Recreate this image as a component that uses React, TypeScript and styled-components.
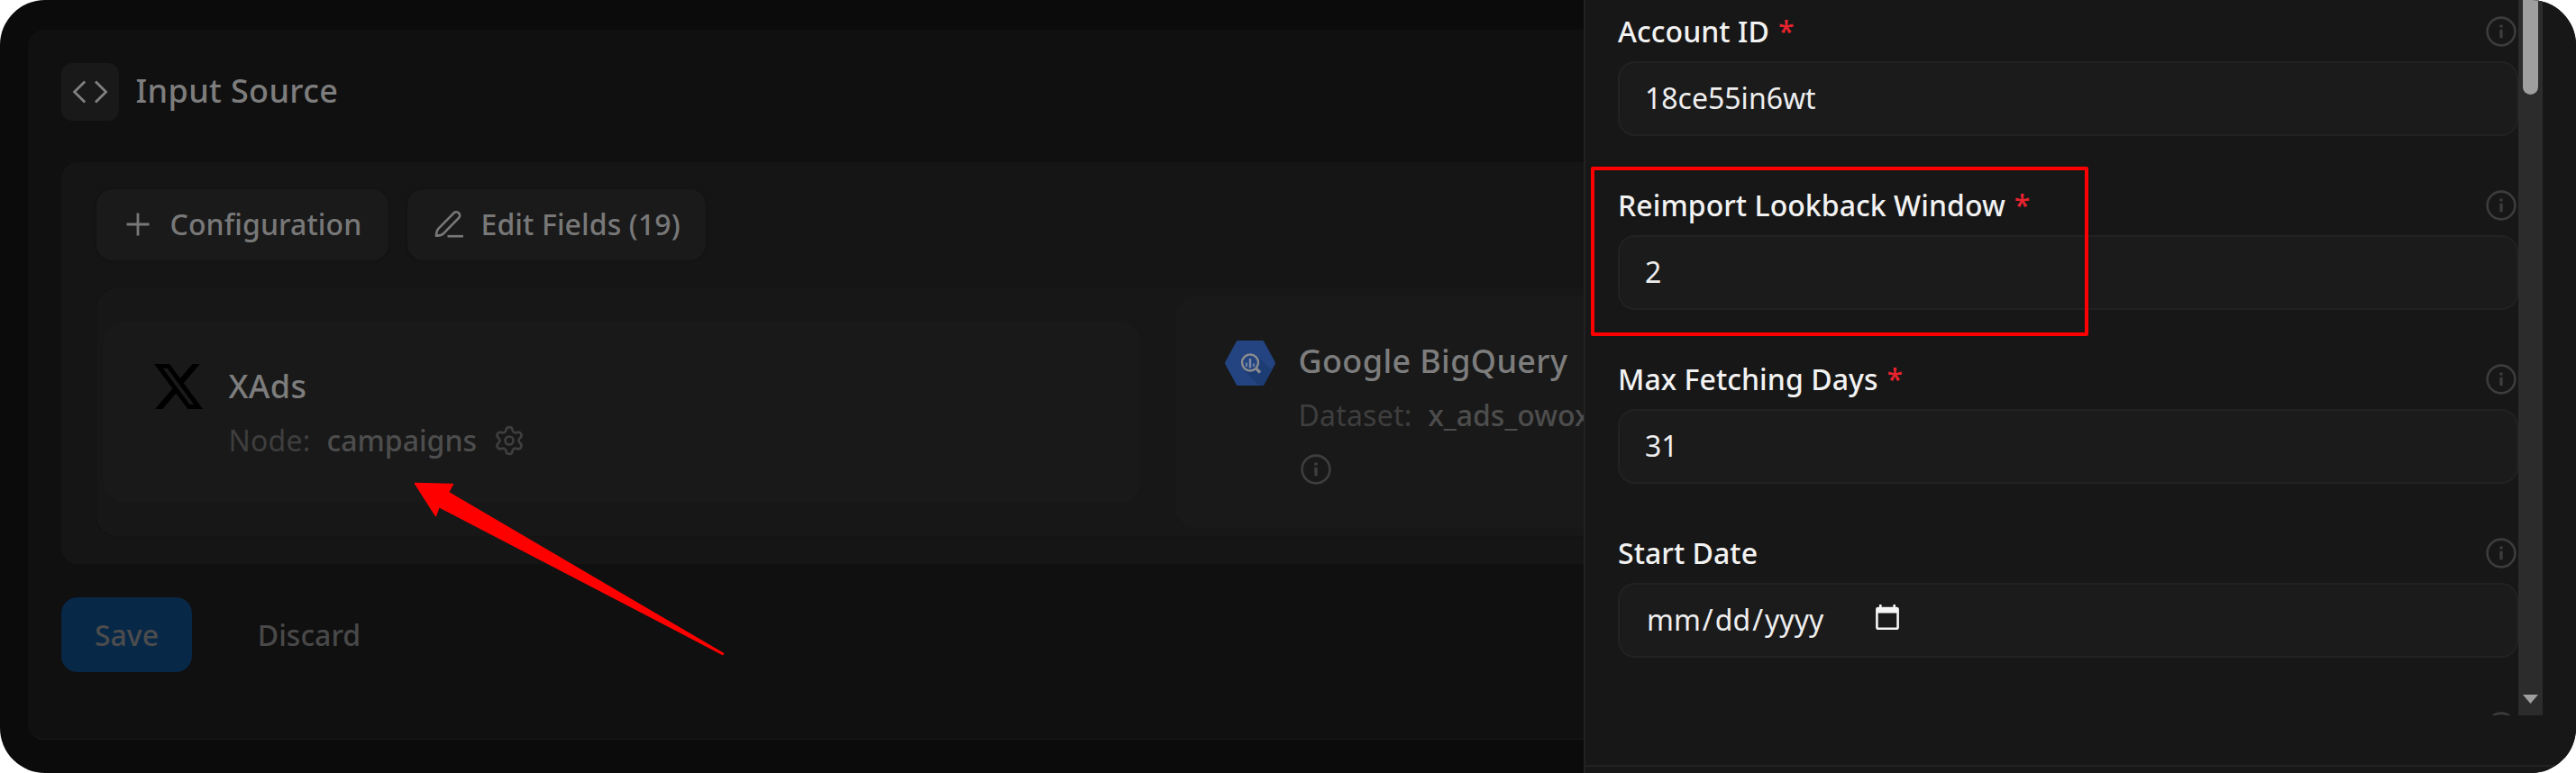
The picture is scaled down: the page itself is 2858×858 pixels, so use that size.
import React from "react";
import styled, { createGlobalStyle } from "styled-components";
import { Settings } from "lucide-react";

const GlobalStyle = createGlobalStyle`
  * { box-sizing: border-box; }
  html, body { margin: 0; background: #fff; }
  body { font-family: "Noto Sans", sans-serif; font-size: 32px; line-height: 46px; }
  svg { display: block; flex: none; }
`;

const Frame = styled.div`
  position: relative;
  display: flex;
  width: 2858px;
  height: 858px;
  border-radius: 50px;
  overflow: hidden;
  background: #0b0b0b;
`;

const Main = styled.main`
  width: 1757px;
  flex: none;
  overflow: hidden;
  padding: 33px 0 37px 31px;
`;

const SourceCard = styled.section`
  width: 2400px;
  height: 788px;
  padding: 37px;
  border-radius: 18px;
  background: #101010;
  border-bottom: 1px solid #191919;
`;

const Header = styled.header`
  display: flex;
  align-items: center;
  gap: 18.5px;
`;

const IconTile = styled.div`
  display: grid;
  place-items: center;
  width: 64px;
  height: 64px;
  border-radius: 12px;
  background: #191919;
  color: #808080;
`;

const Title = styled.h2`
  margin: 0;
  font-size: 36px;
  font-weight: 500;
  line-height: 50px;
  letter-spacing: 0.35px;
  color: #7d7d7d;
  white-space: nowrap;
`;

const HeaderTitle = styled(Title)`
  padding-bottom: 3px;
`;

const Panel = styled.div`
  margin-top: 46px;
  height: 446px;
  padding: 29.5px 39px;
  border-radius: 18px;
  background: #151515;
`;

const Toolbar = styled.div`
  display: flex;
  gap: 21.5px;
`;

const ToolButton = styled.button<{ $width: number }>`
  display: flex;
  align-items: center;
  gap: 20px;
  width: ${(p) => p.$width}px;
  height: 79px;
  padding: 0 0 1px 29.5px;
  border: 0;
  border-radius: 18px;
  background: #1a1a1a;
  box-shadow: 0 0 2px 1px #131313;
  color: #787878;
  font: inherit;
  font-weight: 500;
  letter-spacing: 0.1px;
  white-space: nowrap;
`;

const Flow = styled.div`
  display: flex;
  align-items: center;
  gap: 38.5px;
  height: 275.5px;
  margin-top: 31px;
  padding-left: 8px;
  border-radius: 22px;
  background: #171717;
  box-shadow: 0 0 0 1px #131313;
`;

const EndpointCard = styled.article<{ $width: number; $height: number; $gap: number }>`
  display: flex;
  align-items: flex-start;
  gap: ${(p) => p.$gap}px;
  flex: none;
  width: ${(p) => p.$width}px;
  height: ${(p) => p.$height}px;
  padding: 47px 0 0 55.5px;
  border-radius: 22px;
  background: #191919;
`;

const EndpointLogo = styled.div<{ $drop?: number }>`
  padding-top: ${(p) => p.$drop ?? 0}px;
`;

const EndpointInfo = styled.div`
  display: flex;
  flex-direction: column;
  gap: 12.5px;
`;

const Detail = styled.div`
  display: flex;
  align-items: center;
  gap: 18px;
  height: 46px;
  color: #3e3e3e;
  white-space: nowrap;
`;

const HintDetail = styled(Detail)`
  padding: 3px 0 0 2.5px;
`;

const DetailLabel = styled.span`
  letter-spacing: 0.2px;
`;

const DetailValue = styled.span`
  font-weight: 500;
  color: #4d4d4d;
`;

const Actions = styled.div`
  display: flex;
  gap: 37px;
  margin-top: 37px;
`;

const ActionButton = styled.button<{ $primary?: boolean }>`
  height: 83px;
  width: ${(p) => (p.$primary ? 145 : 186)}px;
  padding: 0;
  border: 0;
  border-radius: 18px;
  background: ${(p) => (p.$primary ? "#082848" : "transparent")};
  color: ${(p) => (p.$primary ? "#4c4c4c" : "#484848")};
  font: inherit;
  font-weight: 500;
`;

const Drawer = styled.aside`
  flex: 1;
  display: flex;
  flex-direction: column;
  border-left: 2px solid #222;
  background: #171717;
`;

const DrawerScroll = styled.div`
  display: flex;
  width: 1062px;
  height: 794px;
  overflow: hidden;
`;

const FieldList = styled.div`
  display: flex;
  flex-direction: column;
  gap: 54px;
  flex: 1;
  padding: 12px 0 0 36px;
`;

const Field = styled.div`
  display: flex;
  flex-direction: column;
  gap: 10px;
`;

const LabelRow = styled.div`
  display: flex;
  align-items: center;
  height: 46px;
  padding-right: 2px;
  font-weight: 500;
  letter-spacing: 0.05px;
  color: #f2f2f2;
  white-space: nowrap;
`;

const Required = styled.span`
  margin-left: 10px;
  color: #e9242f;
`;

const Hint = styled.span`
  margin-left: auto;
  color: #3c3c3c;
`;

const InputBox = styled.div`
  display: flex;
  align-items: center;
  height: 83px;
  padding: 0 28px 1px;
  border: 2px solid #222;
  border-radius: 19px;
  background: #1b1b1b;
  color: #eee;
`;

const DatePart = styled.span`
  padding: 0 2px;
`;

const CalendarSlot = styled.span`
  margin-left: 56px;
  padding-bottom: 5px;
  color: #f6f6f6;
`;

const ScrollTrack = styled.div`
  display: flex;
  flex-direction: column;
  align-items: center;
  justify-content: space-between;
  width: 27px;
  padding-bottom: 13px;
  background: #2c2c2c;
`;

const ScrollThumb = styled.div`
  width: 17px;
  height: 105px;
  border-radius: 0 0 9px 9px;
  background: #9f9f9f;
`;

const DrawerFooter = styled.footer`
  margin-top: 55px;
  flex: 1;
  border-top: 2px solid #222;
`;

const Highlight = styled.div`
  position: absolute;
  left: 1765px;
  top: 185px;
  width: 552px;
  height: 188px;
  border: 4px solid #ff0000;
  border-radius: 2px;
`;

const Pointer = styled.svg`
  position: absolute;
  left: 450px;
  top: 530px;
`;

const InfoIcon = () => (
  <svg width="34" height="34" viewBox="0 0 34 34" fill="none">
    <circle cx="17" cy="17" r="15.4" stroke="currentColor" strokeWidth="2.6" />
    <path d="M15.3 9.4h3.4v3.2h-3.4zM15.3 14.7h3.4v9.6h-3.4z" fill="currentColor" />
  </svg>
);

const CodeIcon = () => (
  <svg width="40" height="26" viewBox="0 0 40 26" fill="none" stroke="currentColor" strokeWidth="2.8">
    <path d="M14.2 1.6 2.6 13l11.6 11.4M26 1.6 37.6 13 26 24.4" />
  </svg>
);

const PlusIcon = () => (
  <svg width="32" height="32" viewBox="0 0 32 32" fill="none" stroke="currentColor" strokeWidth="2.8">
    <path d="M3.5 16h25M16 3.5v25" />
  </svg>
);

const PenIcon = () => (
  <svg width="32" height="32" viewBox="0 0 32 32" fill="none" stroke="currentColor" strokeWidth="2.6">
    <path d="M2 28.6c-.1-3.6.6-6 2.8-8.2L21.600 3.300a3.900 3.900 0 0 1 5.600 5.400L10.400 25.800C8.200 28 5.600 28.800 2 28.600z" strokeLinejoin="round" />
    <path d="M14.500 29.200H32" />
  </svg>
);

const XLogo = () => (
  <svg width="54" height="50" viewBox="1.254 2.25 21.573 19.5" preserveAspectRatio="none">
    <path
      fill="#000"
      d="M18.244 2.25h3.308l-7.227 8.26 8.502 11.24H16.17l-5.214-6.817L4.99 21.75H1.68l7.73-8.835L1.254 2.25H8.08l4.713 6.231zm-1.161 17.52h1.833L7.084 4.126H5.117z"
    />
  </svg>
);

const BigQueryLogo = () => (
  <svg width="56" height="50" viewBox="0 0 56 50" fill="none">
    <path d="M14.5 0h27q1.2 0 1.8 1L55.5 23.5q.8 1.5 0 3L43.3 49q-.6 1-1.8 1h-27q-1.2 0-1.8-1L.5 26.5q-.8-1.5 0-3L12.7 1q.6-1 1.8-1z" fill="#234480" />
    <path d="M37 18.500 52.300 32.400 43.300 49q-.6 1-1.8 1H38L20.500 32.500z" fill="#1d3c74" />
    <circle cx="28" cy="24.5" r="9" stroke="#8b8c8e" strokeWidth="2.4" fill="#234480" />
    <path d="M34.7 31.2 39 35.5" stroke="#8b8c8e" strokeWidth="3.2" />
    <path d="M24 24.500v4.500M32 25.500v3.500" stroke="#6b7f9f" strokeWidth="2.2" />
    <path d="M28 20v10.500" stroke="#7d8ba3" strokeWidth="2.4" />
  </svg>
);

const CalendarIcon = () => (
  <svg width="26" height="29" viewBox="0 0 26 29" fill="none">
    <path d="M4 0h2.6v4H4zM19.400 0H22v4h-2.600z" fill="currentColor" />
    <rect x="1.4" y="4" width="23.2" height="22.8" rx="1.5" stroke="currentColor" strokeWidth="2.6" />
    <path d="M1.400 3.500h23.200v6H1.400z" fill="currentColor" />
  </svg>
);

const ScrollDownIcon = () => (
  <svg width="17" height="10" viewBox="0 0 17 10">
    <path d="M0 0h17L8.5 10z" fill="#9f9f9f" />
  </svg>
);

type FieldProps = { label: string; required?: boolean; children?: React.ReactNode };

const FormField = ({ label, required, children }: FieldProps) => (
  <Field>
    <LabelRow>
      {label}
      {required && <Required>*</Required>}
      <Hint>
        <InfoIcon />
      </Hint>
    </LabelRow>
    <InputBox>{children}</InputBox>
  </Field>
);

export default function App() {
  return (
    <>
      <GlobalStyle />
      <Frame>
        <Main>
          <SourceCard>
            <Header>
              <IconTile>
                <CodeIcon />
              </IconTile>
              <HeaderTitle>Input Source</HeaderTitle>
            </Header>
            <Panel>
              <Toolbar>
                <ToolButton $width={323.5}>
                  <PlusIcon />
                  Configuration
                </ToolButton>
                <ToolButton $width={330.5}>
                  <PenIcon />
                  Edit Fields (19)
                </ToolButton>
              </Toolbar>
              <Flow>
                <EndpointCard $width={1150} $height={201} $gap={29}>
                  <EndpointLogo>
                    <XLogo />
                  </EndpointLogo>
                  <EndpointInfo>
                    <Title>XAds</Title>
                    <Detail>
                      <DetailLabel>Node:</DetailLabel>
                      <DetailValue>campaigns</DetailValue>
                      <Settings size={36} strokeWidth={1.8} />
                    </Detail>
                  </EndpointInfo>
                </EndpointCard>
                <EndpointCard $width={1000} $height={257} $gap={25.5}>
                  <EndpointLogo $drop={2}>
                    <BigQueryLogo />
                  </EndpointLogo>
                  <EndpointInfo>
                    <Title>Google BigQuery</Title>
                    <Detail>
                      <DetailLabel>Dataset:</DetailLabel>
                      <DetailValue>x_ads_owox</DetailValue>
                    </Detail>
                    <HintDetail>
                      <InfoIcon />
                    </HintDetail>
                  </EndpointInfo>
                </EndpointCard>
              </Flow>
            </Panel>
            <Actions>
              <ActionButton $primary>Save</ActionButton>
              <ActionButton>Discard</ActionButton>
            </Actions>
          </SourceCard>
        </Main>
        <Drawer>
          <DrawerScroll>
            <FieldList>
              <FormField label="Account ID" required>18ce55in6wt</FormField>
              <FormField label="Reimport Lookback Window" required>2</FormField>
              <FormField label="Max Fetching Days" required>31</FormField>
              <FormField label="Start Date">
                <DatePart>mm</DatePart>/<DatePart>dd</DatePart>/<DatePart>yyyy</DatePart>
                <CalendarSlot>
                  <CalendarIcon />
                </CalendarSlot>
              </FormField>
              <FormField label="" />
            </FieldList>
            <ScrollTrack>
              <ScrollThumb />
              <ScrollDownIcon />
            </ScrollTrack>
          </DrawerScroll>
          <DrawerFooter />
        </Drawer>
        <Pointer width="360" height="205" viewBox="450 530 360 205">
          <path
            d="M460.5 536.5 502.5 537.5 497.5 546.5 802.5 725.5 802 726.5 487 562.5 483.5 572.5z"
            fill="#ff0000"
            stroke="#ff0000"
            strokeWidth="1.5"
            strokeLinejoin="round"
          />
        </Pointer>
        <Highlight />
      </Frame>
    </>
  );
}
